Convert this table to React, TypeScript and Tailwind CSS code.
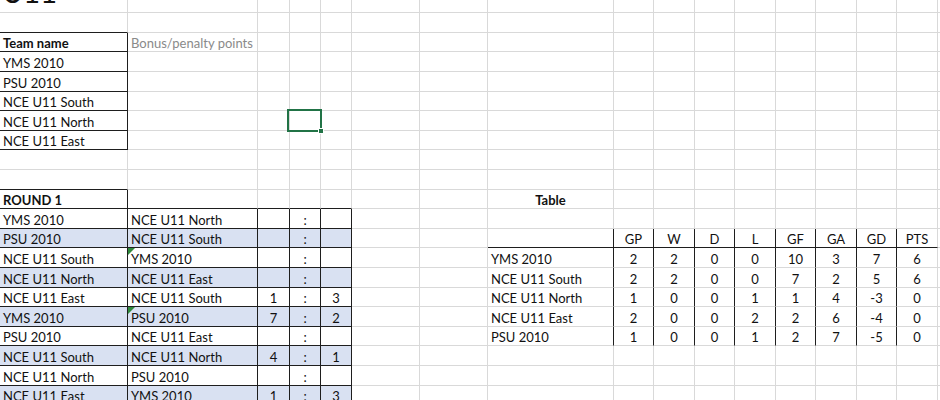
import React from 'react'

const font = { fontFamily: 'Lato, "Open Sans", sans-serif' }

const fixtures = [
  ['YMS 2010', 'NCE U11 North', '', ''],
  ['PSU 2010', 'NCE U11 South', '', ''],
  ['NCE U11 South', 'YMS 2010', '', ''],
  ['NCE U11 North', 'NCE U11 East', '', ''],
  ['NCE U11 East', 'NCE U11 South', '1', '3'],
  ['YMS 2010', 'PSU 2010', '7', '2'],
  ['PSU 2010', 'NCE U11 East', '', ''],
  ['NCE U11 South', 'NCE U11 North', '4', '1'],
  ['NCE U11 North', 'PSU 2010', '', ''],
  ['NCE U11 East', 'YMS 2010', '1', '3'],
]

const standings = [
  ['YMS 2010', 2, 2, 0, 0, 10, 3, 7, 6],
  ['NCE U11 South', 2, 2, 0, 0, 7, 2, 5, 6],
  ['NCE U11 North', 1, 0, 0, 1, 1, 4, -3, 0],
  ['NCE U11 East', 2, 0, 0, 2, 2, 6, -4, 0],
  ['PSU 2010', 1, 0, 0, 1, 2, 7, -5, 0],
]

const teams = ['YMS 2010', 'PSU 2010', 'NCE U11 South', 'NCE U11 North', 'NCE U11 East']
const heads = ['GP', 'W', 'D', 'L', 'GF', 'GA', 'GD', 'PTS']

const getText = (r: number, c: number): string => {
  if (r === 2 && c === 0) return 'Team name'
  if (r === 2 && c === 1) return 'Bonus/penalty points'
  if (r >= 3 && r <= 7 && c === 0) return teams[r - 3]
  if (r === 10 && c === 0) return 'ROUND 1'
  if (r === 10 && c === 7) return 'Table'
  if (r >= 11 && r <= 20) {
    const f = fixtures[r - 11]
    if (c === 0) return f[0]
    if (c === 1) return f[1]
    if (c === 2) return f[2]
    if (c === 3) return ':'
    if (c === 4) return f[3]
  }
  if (r === 12 && c >= 8 && c <= 15) return heads[c - 8]
  if (r >= 13 && r <= 17 && c >= 7 && c <= 15) return String(standings[r - 13][c - 7])
  return ''
}

const rightBlack = (r: number, c: number) =>
  (c === 0 && r >= 2 && r <= 7) ||
  (c === 0 && r === 10) ||
  (c <= 4 && r >= 11 && r <= 20) ||
  (c >= 7 && c <= 14 && r >= 12 && r <= 17)

const bottomBlack = (r: number, c: number) =>
  (c === 0 && r >= 1 && r <= 7) ||
  (c === 0 && r === 9) ||
  (c <= 4 && r >= 10 && r <= 20) ||
  (c >= 7 && c <= 15 && r === 12)

const Cell = ({ r, c }: { r: number; c: number }) => {
  const text = getText(r, c)
  const bold = (r === 2 && c === 0) || (r === 10 && (c === 0 || c === 7))
  const center = (r >= 11 && c >= 2 && c <= 4) || (r >= 12 && r <= 17 && c >= 8) || (r === 10 && c === 7)
  const blue = r >= 11 && r % 2 === 0 && c <= 4
  const muted = r === 2 && c === 1
  return (
    <div
      className={[
        'relative flex items-end border-r border-b whitespace-nowrap px-[3px] text-[13px] leading-[16px]',
        rightBlack(r, c) ? 'border-r-[#1e1e1e]' : 'border-r-[#d9d9d9]',
        bottomBlack(r, c) ? 'border-b-[#1e1e1e]' : 'border-b-[#d9d9d9]',
        blue ? 'bg-[#d9e1f2]' : '',
        center ? 'justify-center' : 'justify-start',
        bold ? 'font-bold' : 'font-normal',
        muted ? 'text-[#8a8a8a]' : 'text-[#111]',
      ].join(' ')}
    >
      {text}
      {c === 1 && (r === 13 || r === 16) && (
        <svg className="absolute left-0 top-0" width="7" height="7" viewBox="0 0 7 7">
          <polygon points="0,0 7,0 0,7" fill="#2f8a3c" />
        </svg>
      )}
      {r === 6 && c === 3 && (
        <div className="absolute -left-[3px] -top-[2px] w-[35px] h-[23px] border-2 border-[#217346] z-10">
          <div className="absolute -right-[4px] -bottom-[4px] w-[6px] h-[6px] bg-[#217346] border border-white" />
        </div>
      )}
    </div>
  )
}

export default function App() {
  const rows = Array.from({ length: 21 }, (_, i) => i)
  const cols = Array.from({ length: 17 }, (_, i) => i)
  return (
    <div className="w-[940px] h-[400px] overflow-hidden bg-white" style={font}>
      <div className="grid grid-cols-[128px_130px_32px_31px_31px_68px_68px_126px_40px_41px_40px_41px_40px_41px_40px_41px_1fr] grid-rows-[13.3px_repeat(20,19.6px)]">
        {rows.map((r) =>
          cols.map((c) =>
            r === 0 && c === 0 ? (
              <div key={`${r}-${c}`} className="relative border-r border-b border-r-[#d9d9d9] border-b-[#d9d9d9]">
                <span className="absolute left-[2px] bottom-[5px] text-[29px] leading-[30px] text-[#111]">U11</span>
              </div>
            ) : (
              <Cell key={`${r}-${c}`} r={r} c={c} />
            )
          )
        )}
      </div>
    </div>
  )
}
